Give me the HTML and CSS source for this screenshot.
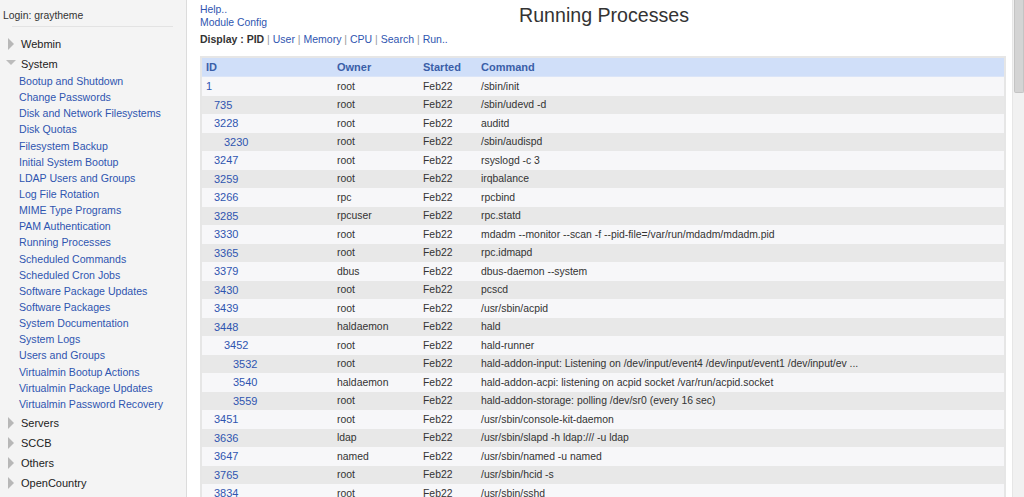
FILE: index.html
```html
<!DOCTYPE html>
<html>
<head>
<meta charset="utf-8">
<title>Running Processes</title>
<link rel="stylesheet" href="styles.css">
</head>
<body>
<div class="app">
  <aside class="sidebar">
    <div class="login">Login: graytheme</div>
    <div class="sep"></div>
    <div class="cat first"><span class="tri-right"></span>Webmin</div>
    <div class="cat open"><span class="tri-down"></span>System</div>
    <ul class="mods">
      <li><a>Bootup and Shutdown</a></li>
      <li><a>Change Passwords</a></li>
      <li><a>Disk and Network Filesystems</a></li>
      <li><a>Disk Quotas</a></li>
      <li><a>Filesystem Backup</a></li>
      <li><a>Initial System Bootup</a></li>
      <li><a>LDAP Users and Groups</a></li>
      <li><a>Log File Rotation</a></li>
      <li><a>MIME Type Programs</a></li>
      <li><a>PAM Authentication</a></li>
      <li><a>Running Processes</a></li>
      <li><a>Scheduled Commands</a></li>
      <li><a>Scheduled Cron Jobs</a></li>
      <li><a>Software Package Updates</a></li>
      <li><a>Software Packages</a></li>
      <li><a>System Documentation</a></li>
      <li><a>System Logs</a></li>
      <li><a>Users and Groups</a></li>
      <li><a>Virtualmin Bootup Actions</a></li>
      <li><a>Virtualmin Package Updates</a></li>
      <li><a>Virtualmin Password Recovery</a></li>
    </ul>
    <div class="cat"><span class="tri-right"></span>Servers</div>
    <div class="cat"><span class="tri-right"></span>SCCB</div>
    <div class="cat"><span class="tri-right"></span>Others</div>
    <div class="cat"><span class="tri-right"></span>OpenCountry</div>
  </aside>
  <main class="main">
    <div class="content">
      <header class="top">
        <div class="toplinks">
          <a>Help..</a>
          <a>Module Config</a>
        </div>
        <h1 class="title">Running Processes</h1>
        <div></div>
      </header>
      <div class="display"><b>Display : PID</b> <span class="bar">|</span> <a>User</a> <span class="bar">|</span> <a>Memory</a> <span class="bar">|</span> <a>CPU</a> <span class="bar">|</span> <a>Search</a> <span class="bar">|</span> <a>Run..</a></div>
      <table class="procs">
        <colgroup><col class="c-id"><col class="c-owner"><col class="c-start"><col></colgroup>
        <thead>
          <tr><th>ID</th><th>Owner</th><th>Started</th><th>Command</th></tr>
        </thead>
        <tbody>
          <tr><td><a class="l0">1</a></td><td>root</td><td>Feb22</td><td>/sbin/init</td></tr>
          <tr><td><a class="l1">735</a></td><td>root</td><td>Feb22</td><td>/sbin/udevd -d</td></tr>
          <tr><td><a class="l1">3228</a></td><td>root</td><td>Feb22</td><td>auditd</td></tr>
          <tr><td><a class="l2">3230</a></td><td>root</td><td>Feb22</td><td>/sbin/audispd</td></tr>
          <tr><td><a class="l1">3247</a></td><td>root</td><td>Feb22</td><td>rsyslogd -c 3</td></tr>
          <tr><td><a class="l1">3259</a></td><td>root</td><td>Feb22</td><td>irqbalance</td></tr>
          <tr><td><a class="l1">3266</a></td><td>rpc</td><td>Feb22</td><td>rpcbind</td></tr>
          <tr><td><a class="l1">3285</a></td><td>rpcuser</td><td>Feb22</td><td>rpc.statd</td></tr>
          <tr><td><a class="l1">3330</a></td><td>root</td><td>Feb22</td><td>mdadm --monitor --scan -f --pid-file=/var/run/mdadm/mdadm.pid</td></tr>
          <tr><td><a class="l1">3365</a></td><td>root</td><td>Feb22</td><td>rpc.idmapd</td></tr>
          <tr><td><a class="l1">3379</a></td><td>dbus</td><td>Feb22</td><td>dbus-daemon --system</td></tr>
          <tr><td><a class="l1">3430</a></td><td>root</td><td>Feb22</td><td>pcscd</td></tr>
          <tr><td><a class="l1">3439</a></td><td>root</td><td>Feb22</td><td>/usr/sbin/acpid</td></tr>
          <tr><td><a class="l1">3448</a></td><td>haldaemon</td><td>Feb22</td><td>hald</td></tr>
          <tr><td><a class="l2">3452</a></td><td>root</td><td>Feb22</td><td>hald-runner</td></tr>
          <tr><td><a class="l3">3532</a></td><td>root</td><td>Feb22</td><td>hald-addon-input: Listening on /dev/input/event4 /dev/input/event1 /dev/input/ev ...</td></tr>
          <tr><td><a class="l3">3540</a></td><td>haldaemon</td><td>Feb22</td><td>hald-addon-acpi: listening on acpid socket /var/run/acpid.socket</td></tr>
          <tr><td><a class="l3">3559</a></td><td>root</td><td>Feb22</td><td>hald-addon-storage: polling /dev/sr0 (every 16 sec)</td></tr>
          <tr><td><a class="l1">3451</a></td><td>root</td><td>Feb22</td><td>/usr/sbin/console-kit-daemon</td></tr>
          <tr><td><a class="l1">3636</a></td><td>ldap</td><td>Feb22</td><td>/usr/sbin/slapd -h ldap:/// -u ldap</td></tr>
          <tr><td><a class="l1">3647</a></td><td>named</td><td>Feb22</td><td>/usr/sbin/named -u named</td></tr>
          <tr><td><a class="l1">3765</a></td><td>root</td><td>Feb22</td><td>/usr/sbin/hcid -s</td></tr>
          <tr><td><a class="l1">3834</a></td><td>root</td><td>Feb22</td><td>/usr/sbin/sshd</td></tr>
        </tbody>
      </table>
    </div>
    <div class="scrollbar"><div class="thumb"></div></div>
  </main>
</div>
</body>
</html>
```

FILE: styles.css
```css
html, body {
  margin: 0;
  padding: 0;
  height: 100%;
  overflow: hidden;
  background: #fff;
  font-family: "Liberation Sans", Arial, sans-serif;
  color: #333;
}

a { color: #2f55b0; text-decoration: none; cursor: pointer; }

.app {
  display: flex;
  height: 497px;
}

.sidebar {
  width: 186px;
  flex: none;
  background: #f4f4f4;
  border-right: 1px solid #dcdcdc;
  font-size: 10.6px;
  overflow: hidden;
}

.login {
  padding: 10px 0 0 3px;
  height: 12px;
  line-height: 12px;
  font-size: 10.4px;
  color: #333;
}

.sep {
  margin: 4px 13px 0 12px;
  height: 1px;
  background: #e3e3e3;
}

.cat {
  display: flex;
  align-items: center;
  height: 20px;
  font-size: 11px;
  color: #222;
  padding-left: 8px;
}
.cat.first { margin-top: 7px; }

.tri-right {
  width: 0;
  height: 0;
  border-top: 6px solid transparent;
  border-bottom: 6px solid transparent;
  border-left: 6px solid #b8b8b8;
  margin-right: 7px;
}
.tri-down {
  width: 0;
  height: 0;
  border-left: 5px solid transparent;
  border-right: 5px solid transparent;
  border-top: 5px solid #bcbcbc;
  margin: -3px 5px 0 -2px;
}

.mods {
  list-style: none;
  margin: -1px 0 0 0;
  padding: 0 0 1px 19px;
}
.mods li {
  height: 16.15px;
  line-height: 16.15px;
  white-space: nowrap;
}

.main {
  flex: 1;
  display: flex;
  min-width: 0;
}

.content {
  flex: 1;
  padding: 3px 6px 0 13px;
  min-width: 0;
}

.top {
  display: grid;
  grid-template-columns: 1fr auto 1fr;
  align-items: start;
}
.toplinks {
  display: flex;
  flex-direction: column;
  font-size: 10.4px;
  line-height: 13px;
}
.title {
  margin: 0;
  font-weight: normal;
  font-size: 19.6px;
  line-height: 24px;
  color: #333;
  transform: translateX(1px);
}

.display {
  margin-top: 3px;
  font-size: 10.5px;
  line-height: 14px;
  color: #333;
}
.display b { color: #333; }
.display .bar { color: #999; }

.procs {
  margin-top: 10px;
  width: 100%;
  table-layout: fixed;
  border-collapse: collapse;
  border: 2px solid #e6e6e6;
  font-size: 10.4px;
}
.c-id { width: 132px; }
.c-owner { width: 86px; }
.c-start { width: 58px; }

.procs th {
  background: #d0dff9;
  color: #3a5ea8;
  font-weight: bold;
  font-size: 11px;
  text-align: left;
  height: 18px;
  padding: 0 0 0 4px;
  border-bottom: 1px solid #dbe5f8;
}
.procs td {
  height: 18.5px;
  padding: 0 0 0 4px;
  white-space: nowrap;
  overflow: hidden;
}
.procs td:first-child { font-size: 11px; }
.procs tbody tr:nth-child(odd) td { background: #f7f7f9; }
.procs tbody tr:nth-child(even) td { background: #e8e8e8; }

.l1 { padding-left: 8px; }
.l2 { padding-left: 18px; }
.l3 { padding-left: 27px; }

.scrollbar {
  width: 11px;
  flex: none;
  background: #f1f1f1;
  border-left: 1px solid #e6e6e6;
  position: relative;
}
.thumb {
  position: absolute;
  left: 1px;
  top: 0;
  width: 8px;
  height: 92px;
  background: #d4d4d4;
  border: 1px solid #c4c4c4;
  border-top: none;
  border-radius: 0 0 2px 2px;
}
```
